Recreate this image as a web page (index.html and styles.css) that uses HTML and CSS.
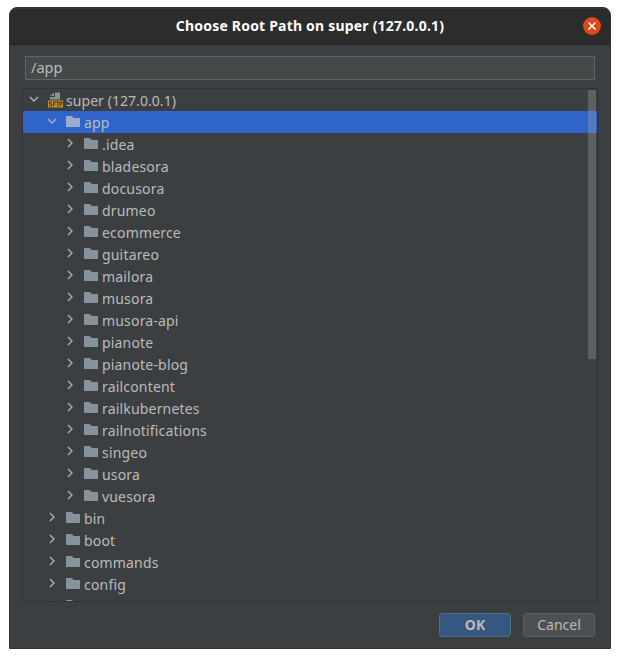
FILE: index.html
```html
<!DOCTYPE html>
<html lang="en">
<head>
<meta charset="utf-8">
<title>Choose Root Path</title>
<link rel="stylesheet" href="styles.css">
</head>
<body>
<svg class="defs" width="0" height="0">
  <symbol id="folder" viewBox="0 0 14 11"><path d="M0 0h5.6L8 2h6v9H0z" fill="currentColor"/></symbol>
  <symbol id="right" viewBox="0 0 10 10"><path d="M3 1l4 4-4 4" fill="none" stroke="currentColor" stroke-width="1.4"/></symbol>
  <symbol id="down" viewBox="0 0 10 10"><path d="M1 3l4 4 4-4" fill="none" stroke="currentColor" stroke-width="1.4"/></symbol>
</svg>
<div class="window">
  <header class="titlebar">
    <h1 class="title">Choose Root Path on super (127.0.0.1)</h1>
    <button class="close" aria-label="Close"><svg width="18" height="18" viewBox="0 0 18 18"><path d="M5.5 5.5l7 7m0-7l-7 7" fill="none" stroke="#fff" stroke-width="1.5"/></svg></button>
  </header>
  <div class="path">/app</div>
  <div class="tree" id="tree">
    <div class="row level-0"><svg class="arrow"><use href="#down"/></svg><svg class="sftp" width="15" height="16" viewBox="0 0 15 16"><path d="M7 0.5h5v7H2V5h5z" fill="#87939a"/><path d="M2.2 4L6 .5V4z" fill="#87939a"/><path d="M0 8.5h15v7H0z" fill="#c28f30"/><path d="M4 10H1.5v2H3.5v2H1M5.5 14.5V10H8M5.5 12h2M8 10h3.5M9.8 10v4.5M12 14.5V10h2v2.2h-2" fill="none" stroke="#49391c" stroke-width="1"/></svg><span class="name">super (127.0.0.1)</span></div>
  </div>
  <footer class="actions"><button class="btn primary">OK</button><button class="btn">Cancel</button></footer>
</div>
<script src="tree.js"></script>
</body>
</html>
```
FILE: styles.css
```css
* { box-sizing: border-box; }
body { margin: 0; background: #fff; font-family: "Noto Sans", sans-serif; font-size: 14px; color: #bbb; }
.defs { display: block; }
.window { width: 602px; height: 642px; margin: 7px 0 0 9px; background: #3c3f41; border: 1px solid #303233; border-radius: 8px 8px 0 0; overflow: hidden; }
.titlebar { display: flex; align-items: center; height: 37px; padding: 0 9px 2px 27px; background: #2c2c2c; border-top: 1px solid #3a3a3a; border-bottom: 1px solid #222; }
.title { flex: 1; margin: 0; text-align: center; font-size: 14px; letter-spacing: .2px; line-height: 20px; font-weight: 700; color: #fff; white-space: nowrap; }
.close { display: flex; width: 18px; height: 18px; padding: 0; border: 0; border-radius: 50%; background: #e04a1a; }
.path { height: 24px; margin: 11px 15px 0; padding: 0 5px; border: 1px solid #646464; background: #45494a; line-height: 21px; font-size: 14.5px; }
.tree { position: relative; height: 514px; margin: 8px 12px 0; border: 1px solid #323232; overflow: hidden; }
.tree::after { content: ""; position: absolute; top: 1px; right: 1px; width: 8px; height: 269px; background: rgba(166,166,166,.32); }
.row { display: flex; align-items: center; height: 22px; white-space: nowrap; }
.level-0 { padding-left: 6px; }
.level-1 { padding-left: 24px; }
.level-2 { padding-left: 42px; }
.selected { background: #2f65ca; }
.arrow { width: 10px; height: 10px; margin: -2px 9px 0 0; color: #adafb0; flex: none; }
.folder { width: 14px; height: 11px; margin: -1px 4px 0 0; color: #87939a; flex: none; }
.selected .folder { color: #9bacc8; }
.sftp { flex: none; margin-right: 3px; }
.name { line-height: 22px; padding-top: 2px; letter-spacing: .18px; }
.level-0 .name { letter-spacing: .06px; }
.actions { display: flex; justify-content: flex-end; gap: 12px; padding: 11px 15px 0; }
.btn { width: 72px; height: 24px; padding: 0; border: 1px solid #5e6060; border-radius: 3px; background: #4c5052; color: #bbb; font: 14px/20px "Noto Sans", sans-serif; }
.primary { border-color: #4c708c; background: #365880; font-weight: 700; }
```
FILE: tree.js
```js
const folders = [
  [1, "app"],
  ...[".idea", "bladesora", "docusora", "drumeo", "ecommerce", "guitareo", "mailora", "musora", "musora-api", "pianote", "pianote-blog", "railcontent", "railkubernetes", "railnotifications", "singeo", "usora", "vuesora"].map(name => [2, name]),
  ...["bin", "boot", "commands", "config", "containerd"].map(name => [1, name])
];
document.getElementById("tree").insertAdjacentHTML("beforeend", folders.map(([level, name]) =>
  `<div class="row level-${level}${name === "app" ? " selected" : ""}"><svg class="arrow"><use href="#${name === "app" ? "down" : "right"}"/></svg><svg class="folder"><use href="#folder"/></svg><span class="name">${name}</span></div>`
).join(""));
```
